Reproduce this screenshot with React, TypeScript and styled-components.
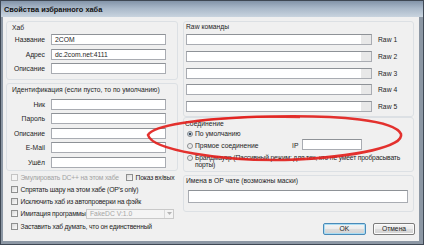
import React from "react";
import styled, { createGlobalStyle } from "styled-components";

const GlobalStyle = createGlobalStyle`
  html, body { margin: 0; padding: 0; }
  body {
    background: #f0f0f0;
    font-family: "Liberation Sans", Arial, sans-serif;
    font-size: 6.75px;
    color: #1e1e1e;
  }
  * { box-sizing: border-box; }
`;

const Window = styled.div`
  position: relative;
  width: 424px;
  height: 245px;
  display: flex;
  flex-direction: column;
  background: #8c97a4;
  border: 1px solid #3f4854;
  overflow: hidden;
`;

const TitleBar = styled.div`
  flex: none;
  height: 16px;
  display: flex;
  align-items: center;
  padding-left: 3px;
  background: linear-gradient(to bottom, #8394a9 0%, #a9b8c9 45%, #c9d4df 100%);
  font-size: 7.4px;
  font-weight: bold;
  color: #111;
  white-space: nowrap;
`;

const Body = styled.div`
  flex: 1;
  margin: 0 4px 3px 2px;
  padding: 4px 5px 0 3px;
  background: #f0f0f0;
  display: flex;
  gap: 5px;
`;

const Column = styled.div<{ $w: number }>`
  width: ${(p) => p.$w}px;
  flex: none;
  display: flex;
  flex-direction: column;
`;

const Group = styled.div<{ $h: number; $mt?: number }>`
  height: ${(p) => p.$h}px;
  margin-top: ${(p) => p.$mt ?? 0}px;
  border: 1px solid #dce0e4;
  border-radius: 3px;
  display: flex;
  flex-direction: column;
  flex: none;
`;

const GroupLabel = styled.div<{ $mt: number; $ml: number }>`
  height: 8px;
  line-height: 8px;
  margin-top: ${(p) => p.$mt}px;
  margin-left: ${(p) => p.$ml}px;
  white-space: nowrap;
`;

const FieldList = styled.div<{ $mt: number }>`
  margin-top: ${(p) => p.$mt}px;
  display: flex;
  flex-direction: column;
  gap: 3.5px;
`;

const FieldRow = styled.div`
  display: grid;
  grid-template-columns: 38px 115px;
  column-gap: 6px;
  align-items: center;
  height: 11px;
`;

const FieldLabel = styled.span`
  text-align: right;
  white-space: nowrap;
`;

const TextBox = styled.div<{ $w?: number; $h?: number }>`
  width: ${(p) => (p.$w ? `${p.$w}px` : "auto")};
  height: ${(p) => p.$h ?? 11}px;
  background: #fff;
  border: 1px solid #a9acb2;
  border-top-color: #8e9297;
  display: flex;
  align-items: center;
  padding-left: 3px;
  white-space: nowrap;
  flex: none;
`;

const NamesInput = styled(TextBox)`
  margin-top: 5px;
  margin-left: 4px;
  width: 220px;
  height: 13px;
`;

const CheckList = styled.div`
  display: flex;
  flex-direction: column;
  gap: 0.3px;
  padding-left: 5px;
`;

const CheckRow = styled.div`
  height: 12px;
  display: flex;
  align-items: center;
`;

const CheckItem = styled.div<{ $w?: number }>`
  display: flex;
  align-items: center;
  width: ${(p) => (p.$w ? `${p.$w}px` : "auto")};
  flex: none;
`;

const CheckBox = styled.span<{ $disabled?: boolean }>`
  width: 7px;
  height: 7px;
  flex: none;
  margin-right: 2.5px;
  border: 1px solid ${(p) => (p.$disabled ? "#c4c4c4" : "#8e8f8f")};
  background: ${(p) =>
    p.$disabled
      ? "#f4f4f4"
      : "linear-gradient(135deg, #d8d8d8 0%, #eeeeee 60%, #fafafa 100%)"};
`;

const CheckText = styled.span<{ $disabled?: boolean }>`
  color: ${(p) => (p.$disabled ? "#a3a3a3" : "#1e1e1e")};
  white-space: nowrap;
  letter-spacing: -0.18px;
`;

const Combo = styled.div`
  width: 88px;
  height: 10px;
  border: 1px solid #c9c9c9;
  background: #f4f4f4;
  display: flex;
  align-items: center;
  color: #a6a6a6;
  padding-left: 3px;
`;

const ComboText = styled.span`
  flex: 1;
  white-space: nowrap;
`;

const ComboArrow = styled.span`
  width: 9px;
  height: 8px;
  border-left: 1px solid #dadada;
  display: flex;
  align-items: center;
  justify-content: center;
`;

const RawList = styled.div`
  margin-top: 3.3px;
  padding-left: 2px;
  display: flex;
  flex-direction: column;
  gap: 5.7px;
`;

const RawRow = styled.div`
  height: 11px;
  display: flex;
  align-items: center;
  gap: 6px;
`;

const RawBox = styled.div`
  width: 186px;
  height: 11px;
  border: 1px solid #a9acb2;
  border-top-color: #8e9297;
  background: #fff;
  display: flex;
  justify-content: flex-end;
`;

const RawCap = styled.span`
  width: 10px;
  height: 100%;
  background: #e8e8e8;
`;

const SideLabel = styled.span`
  white-space: nowrap;
`;

const RadioRow = styled.div<{ $mt: number; $h: number; $align: string }>`
  margin-top: ${(p) => p.$mt}px;
  height: ${(p) => p.$h}px;
  padding-left: 3px;
  display: flex;
  align-items: ${(p) => p.$align};
`;

const Radio = styled.span<{ $checked?: boolean; $mb?: number; $mt?: number }>`
  width: 6px;
  height: 6px;
  flex: none;
  margin-right: 2px;
  margin-bottom: ${(p) => p.$mb ?? 0}px;
  margin-top: ${(p) => p.$mt ?? 0}px;
  border-radius: 50%;
  border: 1px solid #8a8d90;
  background: ${(p) =>
    p.$checked
      ? "radial-gradient(circle, #3a4a5a 0 1.3px, #c5d3e0 1.6px, #eef2f5 100%)"
      : "radial-gradient(circle, #e4e4e4 0, #f8f8f8 100%)"};
`;

const RadioText = styled.span<{ $w?: number }>`
  width: ${(p) => (p.$w ? `${p.$w}px` : "auto")};
  line-height: 8px;
  flex: none;
  white-space: nowrap;
`;

const WrapText = styled.span`
  width: 216px;
  line-height: 7.7px;
  letter-spacing: -0.18px;
`;

const IpLabel = styled.span`
  width: 10px;
  line-height: 8px;
  flex: none;
`;

const ButtonRow = styled.div`
  margin-top: 11px;
  margin-right: -1px;
  display: flex;
  justify-content: flex-end;
  gap: 7px;
`;

const Button = styled.div<{ $default?: boolean; $w: number }>`
  width: ${(p) => p.$w}px;
  height: 11.5px;
  border: 1px solid ${(p) => (p.$default ? "#4a8ab8" : "#7b7b7b")};
  border-radius: 2px;
  background: linear-gradient(to bottom, #f4f4f4 0%, #ebebeb 50%, #dddddd 51%, #d2d2d2 100%);
  box-shadow: ${(p) => (p.$default ? "inset 0 0 0 1px #a9dcf3" : "inset 0 0 0 1px #fbfbfb")};
  display: flex;
  align-items: center;
  justify-content: center;
  white-space: nowrap;
`;

const Overlay = styled.svg`
  position: absolute;
  left: -1px;
  top: -1px;
  width: 424px;
  height: 245px;
  pointer-events: none;
`;

const hubFields = [
  { label: "Название", value: "2COM" },
  { label: "Адрес", value: "dc.2com.net:4111" },
  { label: "Описание", value: "" },
];

const idFields = ["Ник", "Пароль", "Описание", "E-Mail", "Ушёл"];

export default function App() {
  return (
    <>
      <GlobalStyle />
      <Window>
        <TitleBar>Свойства избранного хаба</TitleBar>
        <Body>
          <Column $w={172}>
            <Group $h={59}>
              <GroupLabel $mt={2.4} $ml={5}>Хаб</GroupLabel>
              <FieldList $mt={1.9}>
                {hubFields.map((f) => (
                  <FieldRow key={f.label}>
                    <FieldLabel>{f.label}</FieldLabel>
                    <TextBox>{f.value}</TextBox>
                  </FieldRow>
                ))}
              </FieldList>
            </Group>
            <Group $h={88} $mt={3}>
              <GroupLabel $mt={2.2} $ml={5}>Идентификация (если пусто, то по умолчанию)</GroupLabel>
              <FieldList $mt={4.8}>
                {idFields.map((f) => (
                  <FieldRow key={f}>
                    <FieldLabel>{f}</FieldLabel>
                    <TextBox />
                  </FieldRow>
                ))}
              </FieldList>
            </Group>
            <CheckList>
              <CheckRow>
                <CheckItem $w={115}>
                  <CheckBox $disabled />
                  <CheckText $disabled>Эмулировать DC++ на этом хабе</CheckText>
                </CheckItem>
                <CheckItem>
                  <CheckBox />
                  <CheckText>Показ вх/вых</CheckText>
                </CheckItem>
              </CheckRow>
              <CheckRow>
                <CheckItem>
                  <CheckBox />
                  <CheckText>Спрятать шару на этом хабе (OP's only)</CheckText>
                </CheckItem>
              </CheckRow>
              <CheckRow>
                <CheckItem>
                  <CheckBox />
                  <CheckText>Исключить хаб из автопроверки на фэйк</CheckText>
                </CheckItem>
              </CheckRow>
              <CheckRow>
                <CheckItem $w={75}>
                  <CheckBox />
                  <CheckText>Имитация программы</CheckText>
                </CheckItem>
                <Combo>
                  <ComboText>FakeDC V:1.0</ComboText>
                  <ComboArrow>
                    <svg width="5" height="3" viewBox="0 0 5 3">
                      <path d="M0 0 L5 0 L2.5 3 Z" fill="#b5b5b5" />
                    </svg>
                  </ComboArrow>
                </Combo>
              </CheckRow>
              <CheckRow>
                <CheckItem>
                  <CheckBox />
                  <CheckText>Заставить хаб думать, что он единственный</CheckText>
                </CheckItem>
              </CheckRow>
            </CheckList>
          </Column>
          <Column $w={231}>
            <Group $h={96}>
              <GroupLabel $mt={1} $ml={2}>Raw команды</GroupLabel>
              <RawList>
                {[1, 2, 3, 4, 5].map((n) => (
                  <RawRow key={n}>
                    <RawBox>
                      <RawCap />
                    </RawBox>
                    <SideLabel>Raw {n}</SideLabel>
                  </RawRow>
                ))}
              </RawList>
            </Group>
            <Group $h={55}>
              <GroupLabel $mt={2} $ml={1}>Соединение</GroupLabel>
              <RadioRow $mt={1.3} $h={10} $align="center">
                <Radio $checked />
                <RadioText>По умолчанию</RadioText>
              </RadioRow>
              <RadioRow $mt={-0.3} $h={11} $align="flex-end">
                <Radio $mb={1} />
                <RadioText $w={97}>Прямое соединение</RadioText>
                <IpLabel>IP</IpLabel>
                <TextBox $w={60} />
              </RadioRow>
              <RadioRow $mt={3.5} $h={16} $align="flex-start">
                <Radio $mt={1} />
                <WrapText>
                  Брандмауэр (Пассивный режим: для тех, кто не умеет пробрасывать порты)
                </WrapText>
              </RadioRow>
            </Group>
            <Group $h={37} $mt={3}>
              <GroupLabel $mt={1} $ml={2}>Имена в OP чате (возможны маски)</GroupLabel>
              <NamesInput />
            </Group>
            <ButtonRow>
              <Button $default $w={43}>OK</Button>
              <Button $w={42}>Отмена</Button>
            </ButtonRow>
          </Column>
        </Body>
        <Overlay viewBox="0 0 424 245">
          <path
            d="M148,135 C152,126 195,118 270,116.5 C340,115 395,120 401,134 C404,146 360,157 285,160 C220,161 152,150 148,135 Z"
            fill="none"
            stroke="#e2211d"
            strokeWidth="2.6"
            opacity="0.92"
          />
          <path
            d="M196,121.5 C225,117 255,116 300,117.5"
            fill="none"
            stroke="#e2211d"
            strokeWidth="1.6"
            opacity="0.8"
          />
        </Overlay>
      </Window>
    </>
  );
}
